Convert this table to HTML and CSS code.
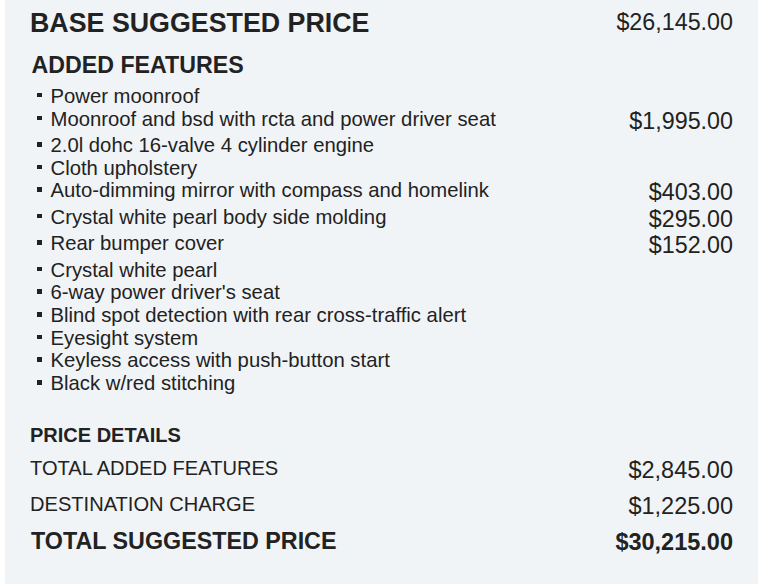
FILE: index.html
```html
<!DOCTYPE html>
<html lang="en">
<head>
<meta charset="utf-8">
<title>Price Summary</title>
<link rel="stylesheet" href="styles.css">
</head>
<body>
<div class="panel">
  <div class="head">
    <h1 class="head-label">BASE SUGGESTED PRICE</h1>
    <span class="head-price">$26,145.00</span>
  </div>
  <h2 class="features-title">ADDED FEATURES</h2>
  <ul class="features">
    <li class="feature"><span class="feature-name">Power moonroof</span></li>
    <li class="feature"><span class="feature-name">Moonroof and bsd with rcta and power driver seat</span><span class="feature-price">$1,995.00</span></li>
    <li class="feature"><span class="feature-name">2.0l dohc 16-valve 4 cylinder engine</span></li>
    <li class="feature"><span class="feature-name">Cloth upholstery</span></li>
    <li class="feature"><span class="feature-name">Auto-dimming mirror with compass and homelink</span><span class="feature-price">$403.00</span></li>
    <li class="feature"><span class="feature-name">Crystal white pearl body side molding</span><span class="feature-price">$295.00</span></li>
    <li class="feature"><span class="feature-name">Rear bumper cover</span><span class="feature-price">$152.00</span></li>
    <li class="feature"><span class="feature-name">Crystal white pearl</span></li>
    <li class="feature"><span class="feature-name">6-way power driver's seat</span></li>
    <li class="feature"><span class="feature-name">Blind spot detection with rear cross-traffic alert</span></li>
    <li class="feature"><span class="feature-name">Eyesight system</span></li>
    <li class="feature"><span class="feature-name">Keyless access with push-button start</span></li>
    <li class="feature"><span class="feature-name">Black w/red stitching</span></li>
  </ul>
  <h3 class="details-title">PRICE DETAILS</h3>
  <div class="details">
    <div class="detail">
      <span class="detail-label">TOTAL ADDED FEATURES</span>
      <span class="detail-price">$2,845.00</span>
    </div>
    <div class="detail">
      <span class="detail-label">DESTINATION CHARGE</span>
      <span class="detail-price">$1,225.00</span>
    </div>
    <div class="detail total">
      <span class="detail-label">TOTAL SUGGESTED PRICE</span>
      <span class="detail-price">$30,215.00</span>
    </div>
  </div>
</div>
</body>
</html>
```

FILE: styles.css
```css
html, body {
  margin: 0;
  padding: 0;
  background: #ffffff;
}

body {
  font-family: "Liberation Sans", Arial, Helvetica, sans-serif;
  color: #222222;
}

.panel {
  margin-left: 5px;
  min-height: 584px;
  box-sizing: border-box;
  background: #f1f4f7;
  padding: 8px 25px 0 25px;
}

.head {
  display: flex;
  justify-content: space-between;
  align-items: flex-start;
}

.head-label {
  margin: 0;
  font-size: 26.8px;
  line-height: 30px;
  font-weight: bold;
}

.head-price {
  margin-top: 1px;
  font-size: 23.3px;
  line-height: 26.4px;
}

.features-title {
  margin: 14px 0 0 1.5px;
  font-size: 23.2px;
  line-height: 26.4px;
  font-weight: bold;
}

.features {
  list-style: none;
  margin: 6.5px 0 0 0;
  padding: 0;
}

.feature {
  display: flex;
  justify-content: space-between;
  align-items: flex-start;
}

.feature-name {
  display: flex;
  font-size: 20.3px;
  line-height: 22.7px;
}

.feature-name::before {
  content: "";
  flex: none;
  width: 4.5px;
  height: 4.5px;
  background: #222222;
  margin: 8px 9px 0 7px;
}

.feature-price {
  font-size: 23.3px;
  line-height: 26.4px;
}

.details-title {
  margin: 29.5px 0 0 0;
  font-size: 20px;
  line-height: 23px;
  font-weight: bold;
}

.details {
  display: flex;
  flex-direction: column;
  margin-top: 9.5px;
}

.detail {
  display: flex;
  justify-content: space-between;
  align-items: flex-start;
}

.detail + .detail {
  margin-top: 9.5px;
}

.detail.total {
  margin-top: 9px;
}

.detail-label {
  font-size: 20.1px;
  line-height: 23px;
}

.detail-price {
  margin-top: 0;
  font-size: 23.5px;
  line-height: 26.4px;
}

.detail.total .detail-label {
  margin-left: 1px;
  font-size: 23.3px;
  line-height: 26.4px;
  font-weight: bold;
}

.detail.total .detail-price {
  margin-top: 1px;
  font-weight: bold;
}
```
